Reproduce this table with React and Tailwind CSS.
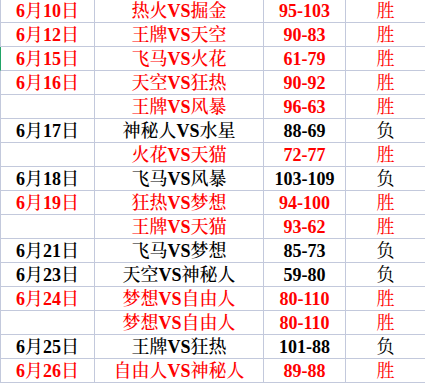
import React from "react";

const rows = [
  ["6月10日", "热火VS掘金", "95-103", "胜", "r"],
  ["6月12日", "王牌VS天空", "90-83", "胜", "r"],
  ["6月15日", "飞马VS火花", "61-79", "胜", "r"],
  ["6月16日", "天空VS狂热", "90-92", "胜", "r"],
  ["", "王牌VS风暴", "96-63", "胜", "r"],
  ["6月17日", "神秘人VS水星", "88-69", "负", "k"],
  ["", "火花VS天猫", "72-77", "胜", "r"],
  ["6月18日", "飞马VS风暴", "103-109", "负", "k"],
  ["6月19日", "狂热VS梦想", "94-100", "胜", "r"],
  ["", "王牌VS天猫", "93-62", "胜", "r"],
  ["6月21日", "飞马VS梦想", "85-73", "负", "k"],
  ["6月23日", "天空VS神秘人", "59-80", "负", "k"],
  ["6月24日", "梦想VS自由人", "80-110", "胜", "r"],
  ["", "梦想VS自由人", "80-110", "胜", "r"],
  ["6月25日", "王牌VS狂热", "101-88", "负", "k"],
  ["6月26日", "自由人VS神秘人", "89-88", "胜", "r"],
];

function Mixed({ text }) {
  const parts = text.match(/[\x00-\x7f]+|[^\x00-\x7f]+/g) || [];
  return parts.map((p, i) =>
    /^[\x00-\x7f]+$/.test(p) ? (
      <span key={i} className="font-bold">{p}</span>
    ) : (
      <span key={i} className="font-medium">{p}</span>
    )
  );
}

export default function App() {
  return (
    <div
      className="w-[425px] h-[385px] overflow-hidden bg-white"
      style={{ fontFamily: '"Liberation Serif", "Noto Serif CJK SC", "Noto Sans CJK SC", serif' }}
    >
      <div className="-mt-px flex flex-col">
        {rows.map((r, i) => {
          const color = r[4] === "r" ? "text-[#ff0000]" : "text-black";
          return (
            <div
              key={i}
              className={`flex h-[24px] border-b border-l border-[#c3c9dc] text-[18px] leading-none ${color} ${
                i === 2 ? "border-l-[#21a366]" : ""
              }`}
            >
              <div className="w-[94px] shrink-0 border-r border-[#c3c9dc] flex items-center justify-center">
                <Mixed text={r[0]} />
              </div>
              <div className="w-[169px] shrink-0 border-r border-[#c3c9dc] flex items-center justify-center">
                <Mixed text={r[1]} />
              </div>
              <div className="w-[82px] shrink-0 border-r border-[#c3c9dc] flex items-center justify-center font-bold">
                {r[2]}
              </div>
              <div className="flex-1 flex items-center justify-center font-normal">
                {r[3]}
              </div>
            </div>
          );
        })}
      </div>
    </div>
  );
}
